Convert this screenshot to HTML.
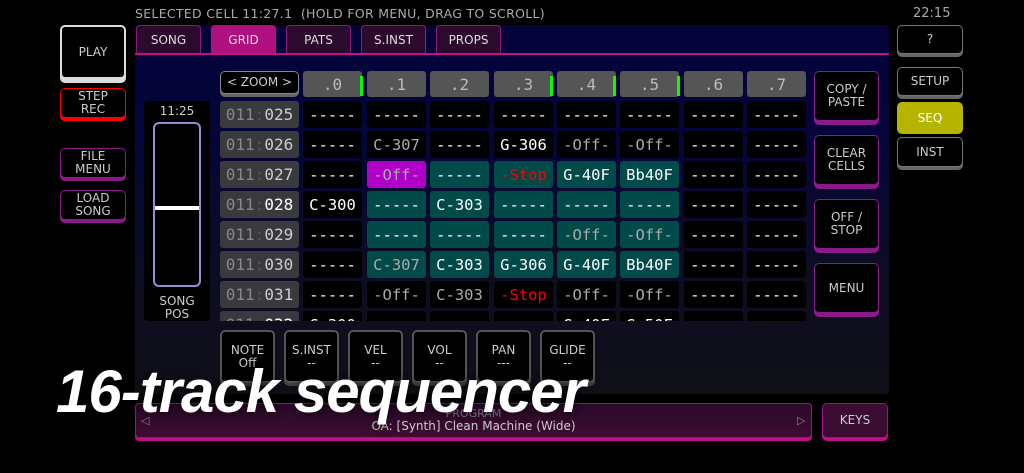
<!DOCTYPE html><html><head><style>
*{margin:0;padding:0;box-sizing:border-box}
body{width:1024px;height:473px;background:#000;position:relative;overflow:hidden;font-family:"DejaVu Sans","Liberation Sans",sans-serif;color:#ccc}
.a{position:absolute}
.btn{position:absolute;background:#000;border-radius:5px;display:flex;align-items:center;justify-content:center;text-align:center;font-size:12px;line-height:13px;color:#ccc}
.tab{position:absolute;top:25px;height:28px;width:65px;background:#2c0a2c;border:1px solid #8a1a7a;border-bottom:none;border-radius:4px 4px 0 0;font-size:12px;display:flex;align-items:center;justify-content:center;color:#ddd}
.c{position:absolute;width:59px;height:27px;border-radius:3px;background:#000;font-family:"DejaVu Sans Mono",monospace;font-size:15.5px;display:flex;align-items:center;justify-content:center;color:#fff;overflow:hidden}
.t{background:#004a4a}.g{color:#aaa}.r{color:#f00}
.h{position:absolute;top:71px;width:59px;height:26px;background:#555;border-radius:3px;color:#bbb;font-family:"DejaVu Sans Mono",monospace;font-size:16px;display:flex;align-items:center;justify-content:center}
.rl{position:absolute;left:220px;width:79px;height:27px;background:#3a3a3e;border-radius:3px;font-family:"DejaVu Sans Mono",monospace;font-size:16px;display:flex;align-items:center;justify-content:center;color:#888;overflow:hidden}
.rl b{font-weight:normal;color:#555}.rl i{font-style:normal;color:#ccc}
.gb{position:absolute;top:76px;width:3px;height:20px;background:#0f0}
.pm{position:absolute;top:330px;width:55px;height:53px;background:#000;border:2px solid #555;border-radius:5px;font-size:12px;line-height:13px;text-align:center;padding-top:12px;color:#ccc;box-shadow:0 3px 0 #444}
</style></head><body>
<div class="a" style="left:135px;top:6px;font-size:12.5px;color:#aaa;letter-spacing:.3px">SELECTED CELL 11:27.1 &nbsp;(HOLD FOR MENU, DRAG TO SCROLL)</div>
<div class="a" style="left:913px;top:6px;font-size:13px;color:#aaa">22:15</div>
<div class="a" style="left:135px;top:25px;width:754px;height:369px;border-radius:4px;background:linear-gradient(#04043a 0%,#05053a 30%,#0d0d22 70%,#101018 100%)"></div>
<div class="a" style="left:135px;top:53px;width:754px;height:2px;background:#c0108a"></div>
<div class="tab" style="left:136px">SONG</div>
<div class="tab" style="left:211px;background:#b0107f;border-color:#b0107f">GRID</div>
<div class="tab" style="left:286px">PATS</div>
<div class="tab" style="left:361px">S.INST</div>
<div class="tab" style="left:436px">PROPS</div>
<div class="btn" style="left:60px;top:25px;width:66px;height:54px;border:2px solid #ddd;box-shadow:0 4px 0 #ddd">PLAY</div>
<div class="btn" style="left:60px;top:88px;width:66px;height:30px;border:1px solid #f00;box-shadow:0 3px 0 #f00">STEP<br>REC</div>
<div class="btn" style="left:60px;top:148px;width:66px;height:30px;border:1px solid #8a1a8a;box-shadow:0 3px 0 #8a1a8a">FILE<br>MENU</div>
<div class="btn" style="left:60px;top:190px;width:66px;height:30px;border:1px solid #8a1a8a;box-shadow:0 3px 0 #8a1a8a">LOAD<br>SONG</div>
<div class="btn" style="left:897px;top:25px;width:66px;height:29px;border:1px solid #777;box-shadow:0 3px 0 #666">?</div>
<div class="btn" style="left:897px;top:67px;width:66px;height:29px;border:1px solid #777;box-shadow:0 3px 0 #666">SETUP</div>
<div class="btn" style="left:897px;top:102px;width:66px;height:32px;background:#b5b500;color:#fff">SEQ</div>
<div class="btn" style="left:897px;top:137px;width:66px;height:30px;border:1px solid #777;box-shadow:0 3px 0 #666">INST</div>
<div class="a" style="left:144px;top:101px;width:66px;height:220px;background:#000;border-radius:4px"></div>
<div class="a" style="left:144px;top:104px;width:66px;text-align:center;font-size:12px;color:#ccc">11:25</div>
<div class="a" style="left:153px;top:122px;width:48px;height:165px;border:2px solid #8e8ed8;border-radius:6px"></div>
<div class="a" style="left:155px;top:206px;width:44px;height:4px;background:#fff"></div>
<div class="a" style="left:144px;top:295px;width:66px;text-align:center;font-size:12px;line-height:13px;color:#ccc">SONG<br>POS</div>
<div class="btn" style="left:220px;top:71px;width:79px;height:23px;border:1px solid #888;box-shadow:0 3px 0 #666;font-size:12px">&lt; ZOOM &gt;</div>
<div class="h" style="left:303px">.0</div><div class="h" style="left:367px">.1</div><div class="h" style="left:430px">.2</div><div class="h" style="left:494px">.3</div><div class="h" style="left:557px">.4</div><div class="h" style="left:620px">.5</div><div class="h" style="left:684px">.6</div><div class="h" style="left:747px">.7</div>
<div class="gb" style="left:360px"></div><div class="gb" style="left:550px"></div><div class="gb" style="left:613px"></div><div class="gb" style="left:677px"></div>
<div class="a" style="left:0;top:0;width:1024px;height:321px;overflow:hidden">
<div class="rl" style="top:101px"><span>011<b>:</b><i>025</i></span></div>
<div class="rl" style="top:131px"><span>011<b>:</b><i>026</i></span></div>
<div class="rl" style="top:161px"><span>011<b>:</b><i>027</i></span></div>
<div class="rl" style="top:191px"><span>011<b>:</b><i style="color:#fff">028</i></span></div>
<div class="rl" style="top:221px"><span>011<b>:</b><i>029</i></span></div>
<div class="rl" style="top:251px"><span>011<b>:</b><i>030</i></span></div>
<div class="rl" style="top:281px"><span>011<b>:</b><i>031</i></span></div>
<div class="rl" style="top:311px"><span>011<b>:</b><i style="color:#fff">032</i></span></div>
<div class="c" style="left:303px;top:101px">-----</div><div class="c" style="left:367px;top:101px">-----</div><div class="c" style="left:430px;top:101px">-----</div><div class="c" style="left:494px;top:101px">-----</div><div class="c" style="left:557px;top:101px">-----</div><div class="c" style="left:620px;top:101px">-----</div><div class="c" style="left:684px;top:101px">-----</div><div class="c" style="left:747px;top:101px">-----</div>
<div class="c" style="left:303px;top:131px">-----</div><div class="c g" style="left:367px;top:131px">C-307</div><div class="c" style="left:430px;top:131px">-----</div><div class="c" style="left:494px;top:131px">G-306</div><div class="c g" style="left:557px;top:131px">-Off-</div><div class="c g" style="left:620px;top:131px">-Off-</div><div class="c" style="left:684px;top:131px">-----</div><div class="c" style="left:747px;top:131px">-----</div>
<div class="c" style="left:303px;top:161px">-----</div><div class="c g" style="left:367px;top:161px;background:#b000c8">-Off-</div><div class="c t" style="left:430px;top:161px">-----</div><div class="c t r" style="left:494px;top:161px">-Stop</div><div class="c t" style="left:557px;top:161px">G-40F</div><div class="c t" style="left:620px;top:161px">Bb40F</div><div class="c" style="left:684px;top:161px">-----</div><div class="c" style="left:747px;top:161px">-----</div>
<div class="c" style="left:303px;top:191px">C-300</div><div class="c t" style="left:367px;top:191px">-----</div><div class="c t" style="left:430px;top:191px">C-303</div><div class="c t" style="left:494px;top:191px">-----</div><div class="c t" style="left:557px;top:191px">-----</div><div class="c t" style="left:620px;top:191px">-----</div><div class="c" style="left:684px;top:191px">-----</div><div class="c" style="left:747px;top:191px">-----</div>
<div class="c" style="left:303px;top:221px">-----</div><div class="c t" style="left:367px;top:221px">-----</div><div class="c t" style="left:430px;top:221px">-----</div><div class="c t" style="left:494px;top:221px">-----</div><div class="c t g" style="left:557px;top:221px">-Off-</div><div class="c t g" style="left:620px;top:221px">-Off-</div><div class="c" style="left:684px;top:221px">-----</div><div class="c" style="left:747px;top:221px">-----</div>
<div class="c" style="left:303px;top:251px">-----</div><div class="c t g" style="left:367px;top:251px">C-307</div><div class="c t" style="left:430px;top:251px">C-303</div><div class="c t" style="left:494px;top:251px">G-306</div><div class="c t" style="left:557px;top:251px">G-40F</div><div class="c t" style="left:620px;top:251px">Bb40F</div><div class="c" style="left:684px;top:251px">-----</div><div class="c" style="left:747px;top:251px">-----</div>
<div class="c" style="left:303px;top:281px">-----</div><div class="c g" style="left:367px;top:281px">-Off-</div><div class="c g" style="left:430px;top:281px">C-303</div><div class="c r" style="left:494px;top:281px">-Stop</div><div class="c g" style="left:557px;top:281px">-Off-</div><div class="c g" style="left:620px;top:281px">-Off-</div><div class="c" style="left:684px;top:281px">-----</div><div class="c" style="left:747px;top:281px">-----</div>
<div class="c" style="left:303px;top:311px">C-300</div><div class="c" style="left:367px;top:311px"></div><div class="c" style="left:430px;top:311px"></div><div class="c" style="left:494px;top:311px"></div><div class="c" style="left:557px;top:311px">G-40F</div><div class="c" style="left:620px;top:311px">G-50F</div><div class="c" style="left:684px;top:311px"></div><div class="c" style="left:747px;top:311px"></div>
</div>
<div class="btn" style="left:814px;top:71px;width:65px;height:50px;border:1px solid #8a1a8a;box-shadow:0 4px 0 #8a1a8a">COPY /<br>PASTE</div>
<div class="btn" style="left:814px;top:135px;width:65px;height:50px;border:1px solid #8a1a8a;box-shadow:0 4px 0 #8a1a8a">CLEAR<br>CELLS</div>
<div class="btn" style="left:814px;top:199px;width:65px;height:50px;border:1px solid #8a1a8a;box-shadow:0 4px 0 #8a1a8a">OFF /<br>STOP</div>
<div class="btn" style="left:814px;top:263px;width:65px;height:50px;border:1px solid #8a1a8a;box-shadow:0 4px 0 #8a1a8a">MENU</div>
<div class="pm" style="left:220px">NOTE<br>Off</div>
<div class="pm" style="left:284px">S.INST<br>--</div>
<div class="pm" style="left:348px">VEL<br>--</div>
<div class="pm" style="left:412px">VOL<br>--</div>
<div class="pm" style="left:476px">PAN<br>---</div>
<div class="pm" style="left:540px">GLIDE<br>--</div>
<div class="a" style="left:135px;top:403px;width:677px;height:35px;border:1px solid #a01088;border-radius:4px;background:linear-gradient(#2a0a2a,#3e0c30);box-shadow:0 3px 0 #c0108a"></div>
<div class="a" style="left:135px;top:407px;width:677px;text-align:center;font-size:11px;color:#777">PROGRAM</div>
<div class="a" style="left:135px;top:419px;width:677px;text-align:center;font-size:12px;color:#ccc">OA: [Synth] Clean Machine (Wide)</div>
<div class="a" style="left:141px;top:414px;font-size:11px;color:#888">◁</div>
<div class="a" style="left:797px;top:414px;font-size:11px;color:#888">▷</div>
<div class="btn" style="left:822px;top:403px;width:66px;height:35px;border:1px solid #a01088;background:#3a0c30;box-shadow:0 3px 0 #c0108a">KEYS</div>
<div class="a" style="left:56px;top:357px;font-family:'Liberation Sans',sans-serif;font-weight:bold;font-style:italic;font-size:60px;color:#fff;letter-spacing:-1px;white-space:nowrap;text-shadow:0 0 12px rgba(0,0,0,.8)">16-track sequencer</div>
</body></html>
